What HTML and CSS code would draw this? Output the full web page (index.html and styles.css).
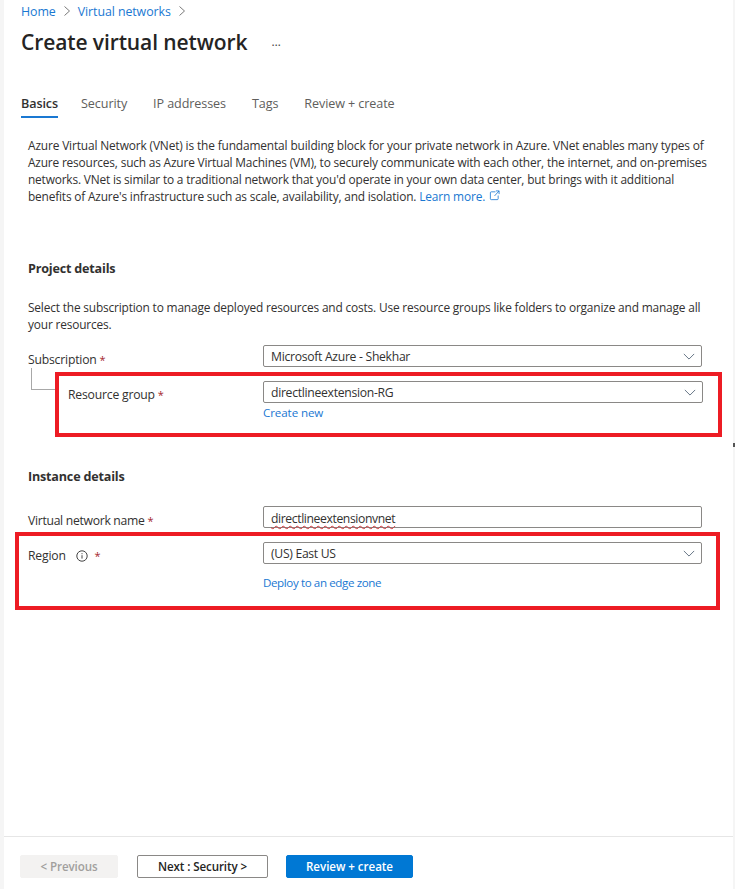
FILE: index.html
```html
<!DOCTYPE html>
<html lang="en">
<head>
<meta charset="utf-8">
<title>Create virtual network</title>
<link rel="stylesheet" href="styles.css">
</head>
<body>
<div class="page">
  <main class="content">
    <nav class="crumbs">
      <a>Home</a>
      <svg class="crumb-sep" viewBox="0 0 8 12"><path d="M1.5 1.5 6.5 6l-5 4.5"/></svg>
      <a>Virtual networks</a>
      <svg class="crumb-sep" viewBox="0 0 8 12"><path d="M1.5 1.5 6.5 6l-5 4.5"/></svg>
    </nav>
    <header class="title-row">
      <h1>Create virtual network</h1>
      <span class="more">&#8230;</span>
    </header>
    <div class="tabs">
      <span class="tab active">Basics</span>
      <span class="tab">Security</span>
      <span class="tab">IP addresses</span>
      <span class="tab">Tags</span>
      <span class="tab">Review + create</span>
    </div>
    <section class="body">
      <p class="intro">Azure Virtual Network (VNet) is the fundamental building block for your private network in Azure. VNet enables many types of<br>
      <span class="line-tight">Azure resources, such as Azure Virtual Machines (VM), to securely communicate with each other, the internet, and on-premises</span><br>
      <span class="line-tight">networks. VNet is similar to a traditional network that you'd operate in your own data center, but brings with it additional</span><br>
      <span class="line-tight">benefits of Azure's infrastructure such as scale, availability, and isolation.</span> <a class="link">Learn more. <svg class="ext" viewBox="0 0 12 12"><path d="M7 2H2.5a1 1 0 0 0-1 1v6.5a1 1 0 0 0 1 1H9a1 1 0 0 0 1-1V6M6 6.5 11 1M7.5 1H11v3.5"/></svg></a></p>

      <h2 class="section-project">Project details</h2>
      <p class="section-text">Select the subscription to manage deployed resources and costs. Use resource groups like folders to organize and manage all your resources.</p>

      <div class="row row-sub">
        <label>Subscription <i>*</i></label>
        <div class="field"><div class="select">Microsoft Azure - Shekhar<svg class="chev" viewBox="0 0 14 8"><path d="M1 1l6 6 6-6"/></svg></div></div>
      </div>
      <div class="row row-rg">
        <label class="indent">Resource group <i>*</i></label>
        <div class="field wide">
          <div class="select">directlineextension-RG<svg class="chev" viewBox="0 0 14 8"><path d="M1 1l6 6 6-6"/></svg></div>
          <a class="link create">Create new</a>
        </div>
      </div>

      <h2 class="section-instance">Instance details</h2>

      <div class="row row-name">
        <label>Virtual network name <i>*</i></label>
        <div class="field"><div class="select input"><span class="spell">directlineextensionvnet</span></div></div>
      </div>
      <div class="row row-region">
        <label>Region <svg class="info" viewBox="0 0 12 12"><circle cx="6" cy="6" r="5.2"/><path d="M6 5.2v3.4M6 3.2v1"/></svg> <i>*</i></label>
        <div class="field">
          <div class="select">(US) East US<svg class="chev" viewBox="0 0 14 8"><path d="M1 1l6 6 6-6"/></svg></div>
          <a class="link deploy">Deploy to an edge zone</a>
        </div>
      </div>
    </section>
    <footer class="actions">
      <button class="btn prev">&lt; Previous</button>
      <button class="btn next">Next : Security &gt;</button>
      <button class="btn primary">Review + create</button>
    </footer>
  </main>
  <span class="connector"></span>
  <span class="mark mark-rg"></span>
  <span class="mark mark-region"></span>
  <span class="edge-tick"></span>
</div>
</body>
</html>
```
FILE: styles.css
```css
* { box-sizing: border-box; }
html, body { margin: 0; padding: 0; }
body {
  background: #fff;
  color: #323130;
  font-family: "Open Sans", "Noto Sans", sans-serif;
  font-size: 12px;
  letter-spacing: -0.14px;
}
.page {
  position: relative;
  width: 735px;
  height: 889px;
  overflow: hidden;
  background: #f5f5f5;
  padding: 0 2px 0 4px;
}
.content {
  display: flex;
  flex-direction: column;
  height: 889px;
  background: #fff;
}
.link { color: #1a78d2; }

.crumbs {
  display: flex;
  align-items: center;
  gap: 7px;
  height: 22px;
  padding-left: 17px;
  font-size: 12.4px;
  letter-spacing: -0.08px;
}
.crumbs a { color: #1a78d2; }
.crumb-sep { width: 8px; height: 12px; fill: none; stroke: #7a7a7a; stroke-width: 1; }
.title-row {
  display: flex;
  align-items: center;
  height: 40px;
  padding-left: 17px;
}
h1 {
  margin: 0;
  font-size: 21px;
  font-weight: 600;
  color: #252423;
  letter-spacing: -0.1px;
}
.more { margin-left: 24px; font-size: 12px; color: #444; letter-spacing: 0; position: relative; top: -1px; }

.tabs {
  display: flex;
  margin-top: 27px;
  height: 29px;
  padding-left: 17px;
  font-size: 12.6px;
  letter-spacing: -0.1px;
  color: #605e5c;
}
.tab { margin-right: 26px; padding-top: 6px; height: 29px; }
.tab.active { margin-right: 23px; color: #323130; font-weight: 600; border-bottom: 2px solid #1a78d2; }

.body { flex: 1; padding: 0 24px; }
.intro { margin: 19px 0 0; font-size: 11.9px; line-height: 17px; white-space: nowrap; }
.line-tight { letter-spacing: -0.18px; }
.ext { width: 11px; height: 11px; fill: none; stroke: #1a78d2; stroke-width: .9; margin-left: 1px; }
h2 { margin: 0; font-size: 12.6px; font-weight: 700; color: #323130; letter-spacing: -0.2px; }
.section-project { margin-top: 55px; line-height: 17px; }
.section-text { margin: 22px 0 0; font-size: 11.9px; line-height: 17px; letter-spacing: -0.17px; }
.section-instance { margin-top: 47px; line-height: 17px; }

.row { display: grid; grid-template-columns: 235px 439px; }
.row label { padding-top: 5px; font-size: 12.2px; line-height: 17px; letter-spacing: -0.2px; }
.row i { color: #a4262c; font-style: normal; font-size: 11px; }
.row-sub { margin-top: 12px; }
.row-sub label { padding-top: 6px; }
.row-rg { margin-top: 13px; }
.row-name { margin-top: 21px; }
.row-region { margin-top: 13px; }
.row-name label { padding-top: 6px; letter-spacing: -0.3px; }
.indent { padding-left: 40px; }
.wide { margin-right: -1px; }
.select {
  display: flex;
  align-items: center;
  justify-content: space-between;
  height: 22px;
  padding: 0 6px 0 7px;
  border: 1px solid #8a8886;
  border-radius: 2px;
  background: #fff;
  font-size: 12.2px;
  letter-spacing: -0.3px;
  color: #323130;
}
.input { padding-top: 2px; letter-spacing: -0.4px; }
.chev { width: 12px; height: 7px; fill: none; stroke: #5f6f80; stroke-width: 1.1; }
.create, .deploy { display: block; font-size: 11.6px; line-height: 16px; }
.create { margin-top: 2px; letter-spacing: -0.1px; }
.deploy { margin-top: 11px; letter-spacing: -0.4px; }
.spell { text-decoration: underline wavy #d13438 1px; text-underline-offset: 2px; }
.info { width: 12px; height: 12px; fill: none; stroke: #444; stroke-width: 1; margin: 0 4px 0 7px; vertical-align: -2px; }

.actions {
  display: flex;
  gap: 19px;
  height: 53px;
  padding: 18px 0 0 16px;
  border-top: 1px solid #e6e6e6;
}
.btn {
  height: 23px;
  padding: 0;
  font-family: inherit;
  font-size: 11.6px;
  font-weight: 600;
  letter-spacing: -0.1px;
  border-radius: 2px;
  border: 1px solid #8a8886;
  background: #fff;
  color: #252423;
}
.prev { width: 98px; background: #f3f2f1; border-color: #f3f2f1; color: #a19f9d; }
.next { width: 131px; }
.primary { width: 127px; margin-left: -1px; letter-spacing: -0.05px; background: #0078d4; border-color: #0078d4; color: #fff; }

.connector {
  position: absolute;
  left: 31px; top: 368px;
  width: 25px; height: 22px;
  border-left: 1px solid #a8a8a8;
  border-bottom: 1px solid #a8a8a8;
}
.mark { position: absolute; border: 4px solid #ed1c24; }
.mark-rg { left: 55px; top: 372px; width: 667px; height: 65px; }
.mark-region { left: 15px; top: 532px; width: 705px; height: 78px; }
.edge-tick { position: absolute; left: 733px; top: 443px; width: 2px; height: 4px; background: #555; }
```
